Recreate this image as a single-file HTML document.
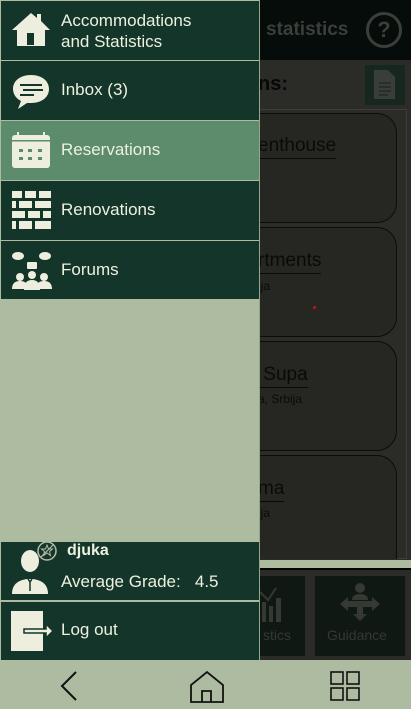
<!DOCTYPE html>
<html><head><meta charset="utf-8"><style>
*{margin:0;padding:0;box-sizing:border-box}
body{width:411px;height:709px;overflow:hidden;background:#adbba0;font-family:"Liberation Sans",sans-serif;position:relative}
.abs{position:absolute}
.item{position:absolute;left:1px;width:258px;background:#13352a;color:#eef0e0;font-size:17px}
.item .t{position:absolute;left:60px}
.ic{position:absolute;left:10px}
</style></head><body>
<div class="abs" style="left:0;top:0;width:411px;height:60px;background:#050c09"></div>
<div class="abs" style="left:266px;top:19px;color:#3b3f3a;font-weight:bold;font-size:19px">statistics</div>
<div class="abs" style="left:366px;top:12px;width:36px;height:36px;border:3px solid #3b3f3a;border-radius:50%;color:#3b3f3a;font-weight:bold;font-size:22px;text-align:center;line-height:30px">?</div>
<div class="abs" style="left:0;top:60px;width:411px;height:500px;background:#2b2c27"></div>
<div class="abs" style="left:258px;top:73px;color:#070807;font-weight:bold;font-size:20px">ns:</div>
<div class="abs" style="left:365px;top:65px;width:40px;height:40px;background:#16271f"></div>
<svg class="abs" style="left:372px;top:69px" width="26" height="32" viewBox="0 0 26 32"><path d="M2 1h14l7 7v22H2z" fill="#3a3e38"/><path d="M7 14h12M7 18h12M7 22h12M7 26h9" stroke="#22261f" stroke-width="1.3"/></svg>
<div class="abs" style="left:250px;top:109px;width:157px;height:450px;border:1px solid #3d3e38;border-left:none"></div>
<div class="abs" style="left:200px;top:113px;width:197px;height:110px;background:#262622;border:1px solid #0c0c0b;border-radius:20px"></div>
<div class="abs" style="left:200px;top:227px;width:197px;height:110px;background:#262622;border:1px solid #0c0c0b;border-radius:20px"></div>
<div class="abs" style="left:200px;top:341px;width:197px;height:110px;background:#262622;border:1px solid #0c0c0b;border-radius:20px"></div>
<div class="abs" style="left:200px;top:455px;width:197px;height:104px;background:#262622;border:1px solid #0c0c0b;border-bottom:none;border-radius:20px 20px 0 0"></div>
<div class="abs" style="left:258px;top:135px;color:#0a0a09;font-size:19px;border-bottom:1px solid #0a0a09;padding-bottom:1px">enthouse</div>
<div class="abs" style="left:258px;top:250px;color:#0a0a09;font-size:19px;border-bottom:1px solid #0a0a09;padding-bottom:1px">rtments</div>
<div class="abs" style="left:258px;top:279px;color:#0a0a09;font-size:12px">ija</div>
<div class="abs" style="left:313px;top:306px;width:3px;height:3px;background:#d01010;border-radius:50%"></div>
<div class="abs" style="left:258px;top:364px;color:#0a0a09;font-size:19px;border-bottom:1px solid #0a0a09;padding-bottom:1px">&nbsp;Supa</div>
<div class="abs" style="left:258px;top:392px;color:#0a0a09;font-size:12px">a, Srbija</div>
<div class="abs" style="left:258px;top:478px;color:#0a0a09;font-size:19px;border-bottom:1px solid #0a0a09;padding-bottom:1px">ma</div>
<div class="abs" style="left:258px;top:506px;color:#0a0a09;font-size:12px">ija</div>
<div class="abs" style="left:0;top:568px;width:411px;height:92px;background:#2b2c27;border-top:2px solid #040404"></div>
<div class="abs" style="left:255px;top:576px;width:50px;height:80px;background:#0f1813"></div>
<div class="abs" style="left:315px;top:576px;width:90px;height:80px;background:#0f1813"></div>
<div class="abs" style="left:263px;top:627px;color:#353833;font-size:14px">stics</div>
<svg class="abs" style="left:258px;top:584px" width="26" height="40"><path d="M2 8l8 8 8-12" stroke="#353833" stroke-width="2" fill="none"/><rect x="4" y="18" width="4" height="20" fill="#353833"/><rect x="11" y="22" width="4" height="16" fill="#353833"/><rect x="18" y="14" width="5" height="24" fill="#353833"/></svg>
<div class="abs" style="left:327px;top:627px;color:#353833;font-size:14px">Guidance</div>
<svg class="abs" style="left:338px;top:582px" width="44" height="42" viewBox="0 0 44 42"><circle cx="22" cy="6" r="5" fill="#353833"/><path d="M14 18q0-6 8-6t8 6z" fill="#353833"/><path d="M2 22l8-7v4h24v-4l8 7-8 7v-4h-9v7h4l-7 7-7-7h4v-7h-9v4z" fill="#353833"/></svg>

<div class="abs" style="left:0;top:0;width:260px;height:660px;background:#adbba0;border-right:1px solid #93a78a"></div>
<div class="item" style="top:1px;height:59px"><svg class="ic" style="top:10px" width="40" height="36" viewBox="0 0 40 36"><path d="M20 2L1 19h5v16h28V19h5L30 10V3h-4v4z" fill="#eeeede"/><rect x="16" y="22" width="7" height="12" fill="#13352a"/></svg><div class="t" style="top:9px;line-height:21px">Accommodations<br>and Statistics</div></div>
<div class="item" style="top:61px;height:59px"><svg class="ic" style="top:12px" width="40" height="38" viewBox="0 0 40 38"><path d="M20 2C9 2 2 8 2 16c0 6 4 10 8 12l-3 8 9-6c1 0 3 0 4 0 11 0 18-6 18-14S31 2 20 2z" fill="#eeeede"/><path d="M9 12h22M12 17h20M9 22h14" stroke="#13352a" stroke-width="2"/></svg><div class="t" style="top:19px">Inbox (3)</div></div>
<div class="item" style="top:121px;height:59px;background:#5c8c6c"><svg class="ic" style="top:11px" width="40" height="38" viewBox="0 0 40 38"><rect x="1" y="3" width="38" height="33" rx="3" fill="#eeeede"/><rect x="1" y="8" width="38" height="1.5" fill="#5c8c6c"/><path d="M7 0v6M33 0v6" stroke="#eeeede" stroke-width="2"/><g fill="#5c8c6c"><rect x="8" y="17" width="4" height="3"/><rect x="17" y="17" width="4" height="3"/><rect x="27" y="17" width="4" height="3"/><rect x="8" y="25" width="4" height="3"/><rect x="17" y="25" width="4" height="3"/><rect x="27" y="25" width="4" height="3"/></g></svg><div class="t" style="top:19px">Reservations</div></div>
<div class="item" style="top:181px;height:59px"><svg class="ic" style="top:9px" width="42" height="42" viewBox="0 0 42 42"><g fill="#eeeede"><rect x="1" y="1" width="10" height="7"/><rect x="14" y="1" width="11" height="7"/><rect x="28" y="1" width="12" height="7"/><rect x="1" y="11" width="4" height="7"/><rect x="8" y="11" width="13" height="7"/><rect x="24" y="11" width="16" height="7"/><rect x="1" y="21" width="13" height="7"/><rect x="17" y="21" width="12" height="7"/><rect x="32" y="21" width="8" height="7"/><rect x="1" y="31" width="4" height="8"/><rect x="8" y="31" width="13" height="8"/><rect x="24" y="31" width="16" height="8"/></g></svg><div class="t" style="top:19px">Renovations</div></div>
<div class="item" style="top:241px;height:58px"><svg class="ic" style="top:8px" width="42" height="42" viewBox="0 0 42 42"><g fill="#eeeede"><ellipse cx="7" cy="7" rx="6" ry="4"/><ellipse cx="34" cy="7" rx="6" ry="4"/><rect x="16" y="13" width="10" height="7" rx="1"/><circle cx="21" cy="26" r="4"/><circle cx="9" cy="28" r="4"/><circle cx="33" cy="28" r="4"/><path d="M1 40q0-8 8-8t8 8zM25 40q0-8 8-8t8 8zM13 41q0-10 8-10t8 10z"/></g></svg><div class="t" style="top:19px">Forums</div></div>

<div class="item" style="top:542px;height:58px"><svg class="ic" style="top:0" width="48" height="56" viewBox="0 0 48 56"><ellipse cx="19" cy="19" rx="9" ry="11" fill="#eeeede"/><path d="M1 52c0-11 8-14 15-15h6c7 1 15 4 15 15z" fill="#eeeede"/><path d="M17 37l2 3 2-3M19 40v9" stroke="#13352a" stroke-width="1.5" fill="none"/><circle cx="36" cy="9" r="9" fill="#13352a" stroke="#b8baa8" stroke-width="1.5"/><path d="M36 3l1.5 4h4l-3 2.5 1 4-3.5-2.5-3.5 2.5 1-4-3-2.5h4z" fill="none" stroke="#b8baa8"/><path d="M30 15l12-12" stroke="#b8baa8" stroke-width="1.2"/></svg><div class="abs" style="left:66px;top:0;font-weight:bold;font-size:16px">djuka</div><div class="t" style="top:30px">Average Grade:&nbsp;&nbsp; 4.5</div></div>
<div class="item" style="top:602px;height:58px"><svg class="ic" style="top:9px" width="44" height="40" viewBox="0 0 44 40"><rect x="0" y="0" width="32" height="40" fill="#eeeede"/><path d="M13 18h22v-5l7 7-7 7v-5H13z" fill="#eeeede" stroke="#13352a" stroke-width="1.5"/></svg><div class="t" style="top:18px">Log out</div></div>

<svg class="abs" style="left:0;top:660px" width="411" height="49"><path d="M76 12L62 26l14 14" stroke="#111" stroke-width="2" fill="none"/><path d="M191 42V25l16-13 16 13v17zM202 42V31h9v11" stroke="#111" stroke-width="1.8" fill="none"/><g stroke="#111" stroke-width="1.6" fill="none"><rect x="331" y="12" width="12" height="12"/><rect x="347" y="12" width="12" height="12"/><rect x="331" y="28" width="12" height="12"/><rect x="347" y="28" width="12" height="12"/></g></svg>
</body></html>
